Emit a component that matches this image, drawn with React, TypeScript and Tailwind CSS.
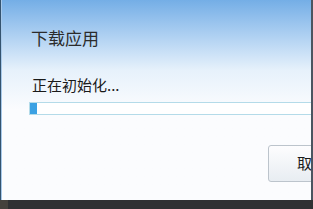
export default function App() {
  const progress = 2.5;

  return (
    <div className="w-[313px] h-[209px] flex flex-col bg-[#2f3133] overflow-hidden" style={{ fontFamily: '"Microsoft YaHei", "Noto Sans CJK SC", sans-serif' }}>
      {/* 窗口 */}
      <div className="h-[200px] flex border-l border-[#34536f] border-r-2 border-r-[#4b5560] overflow-hidden">
        <div className="flex-1 flex flex-col border-l border-[#a7c9ea] bg-gradient-to-b from-[#74aee6] via-[#e6f1fb] via-[35%] to-[#fbfcfe] to-[55%] overflow-hidden">
          <div className="pl-[29px] pt-[27px] h-[66px] text-[17px] leading-[22px] text-[#2b2b2b]">下载应用</div>

          <div className="pl-[30px] pt-[9px] text-[15px] leading-[20px] text-[#1a1a1a]">正在初始化...</div>

          {/* 进度条 */}
          <div className="ml-[27px] mt-[7px] h-[13px] border border-[#b4dbe9] bg-white flex -mr-4">
            <div className="h-full bg-[#3ba1e3]" style={{ width: `${progress}%` }} />
          </div>

          <div className="mt-[30px] flex justify-end">
            <button className="ml-auto w-[95px] -mr-[52px] h-[37px] border border-[#bcc4cc] rounded-[3px] bg-gradient-to-b from-[#fdfdfe] to-[#e8edf2] text-[15px] text-[#1a1a1a] text-left pl-[28px]">
              取消
            </button>
          </div>
        </div>
      </div>

      {/* 任务栏 */}
      <div className="h-[9px] flex bg-[#2f3133]">
        <div className="w-[8px] bg-[#45423d]" />
      </div>
    </div>
  );
}
